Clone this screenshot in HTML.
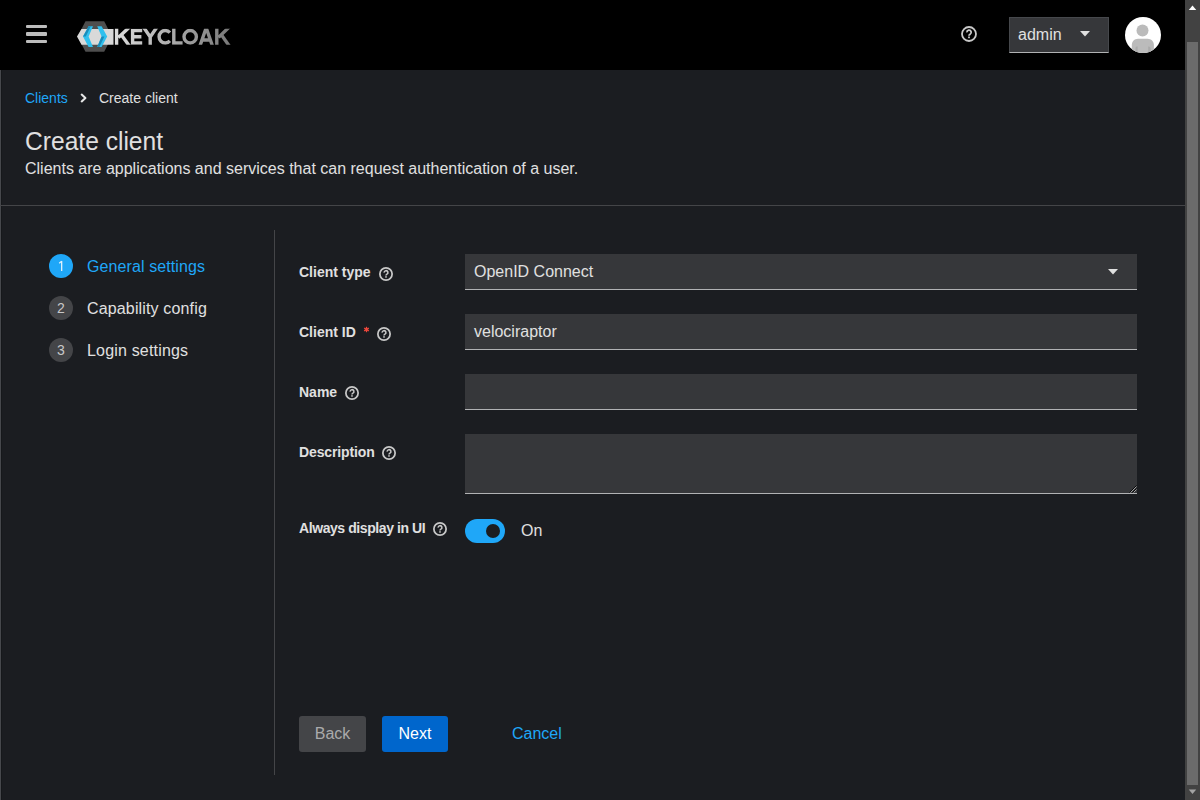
<!DOCTYPE html>
<html>
<head>
<meta charset="utf-8">
<style>
*{box-sizing:border-box;margin:0;padding:0}
html,body{width:1200px;height:800px;overflow:hidden;background:#1b1d21;font-family:"Liberation Sans",sans-serif;color:#e0e0e0}
.a{position:absolute;white-space:nowrap}
#mast{position:absolute;left:0;top:0;width:1185px;height:70px;background:#000}
#main{position:absolute;left:0;top:70px;width:1185px;height:730px;background:#1b1d21}
#lline{position:absolute;left:0;top:70px;width:1px;height:730px;background:#46484c}
#lline2{position:absolute;left:1px;top:70px;width:1px;height:730px;background:#16181b}
#sb{position:absolute;left:1185px;top:0;width:15px;height:800px;background:#424242}
#thumb{position:absolute;left:1187px;top:42px;width:11px;height:743px;background:#6b6b6b}
.hr{position:absolute;background:#444548}
.t14{font-size:14px;line-height:14px}
.t16{font-size:16px;line-height:16px}
.t24{font-size:24px;line-height:24px}
.link{color:#1fa7f8}
.lbl{font-weight:bold;font-size:14px;line-height:14px;color:#e0e0e0}
.inp{position:absolute;left:465px;width:672px;background:#36373a;border-bottom:1px solid #b1b2b4}
.circ{position:absolute;left:49px;width:24px;height:24px;border-radius:12px;background:#444548;color:#c8c8c8;font-size:14px;line-height:24px;text-align:center}
.btn{position:absolute;top:716px;height:36px;border-radius:3px;font-size:16px;line-height:36px;text-align:center}
</style>
</head>
<body>
<div id="mast"></div>
<div id="main"></div>
<div id="lline"></div>
<div id="lline2"></div>

<!-- hamburger -->
<div class="a" style="left:25.6px;top:25px;width:21px;height:3px;background:#bdbdbd;border-radius:1px"></div>
<div class="a" style="left:25.6px;top:32px;width:21px;height:4px;background:#bdbdbd;border-radius:1px"></div>
<div class="a" style="left:25.6px;top:40px;width:21px;height:3px;background:#bdbdbd;border-radius:1px"></div>

<!-- logo -->
<svg class="a" style="left:0;top:0" width="240" height="70" viewBox="0 0 240 70">
  <defs>
    <linearGradient id="tg" gradientUnits="userSpaceOnUse" x1="115" y1="0" x2="229" y2="0">
      <stop offset="0" stop-color="#dcdcdc"/>
      <stop offset="0.5" stop-color="#ababab"/>
      <stop offset="1" stop-color="#7a7a7a"/>
    </linearGradient>
    <clipPath id="tc"><rect x="110" y="28.75" width="125" height="16"/></clipPath>
  </defs>
  <polygon points="85.5,21.2 104.2,21.2 112,36.5 104.2,51.8 85.5,51.8 77.5,36.5" fill="#4e4e4e"/>
  <polygon points="77,36.6 81.5,29 113.5,29 113.5,44.8 81.5,44.8" fill="#d9d9d9"/>
  <polygon points="83,36.6 88.6,26.3 93,26.3 88.6,36.6 93,47 88.6,47" fill="#30c0ee"/>
  <polygon points="83,36.6 88.6,26.3 90.8,26.3 85.8,36.6" fill="#1a8cba"/>
  <polygon points="107.2,36.6 101.6,26.3 97.2,26.3 101.6,36.6 97.2,47 101.6,47" fill="#30c0ee"/>
  <polygon points="101.6,36.6 104.4,36.6 99.4,47 97.2,47" fill="#1a8cba"/>
  <g clip-path="url(#tc)" fill="none" stroke="url(#tg)" stroke-width="3.4" stroke-linejoin="miter" stroke-miterlimit="10">
    <path d="M116.6 27 V46.5 M129.6 27 L118.4 37.4"/><path d="M121.8 35.6 L129.8 46.5"/>
    <path d="M142.2 30.55 H132.6 V42.95 H142.2 M132.6 36.7 H141.4"/>
    <path d="M143.4 27 L150.2 37 L157 27 M150.2 37 V46.5"/>
    <path d="M169.9 32.6 A6.2 6.2 0 1 0 169.9 40.9"/>
    <path d="M173.8 27 V42.95 H182.6"/>
    <circle cx="190.2" cy="36.75" r="6.2"/>
    <path d="M199.6 47 L206.2 27.8 L212.8 47 M202 40 H210.4"/>
    <path d="M216.8 27 V46.5 M229.2 27 L218.6 37.4"/><path d="M222 35.6 L229.6 46.5"/>
  </g>
</svg>

<!-- header help -->
<svg class="a" style="left:961px;top:26px" width="16" height="16" viewBox="0 0 16 16">
  <circle cx="8" cy="8" r="7" fill="none" stroke="#c8c8c8" stroke-width="1.8"/>
  <path d="M5.9 6.4 A2.15 2.15 0 1 1 9.1 8.2 C8.3 8.7 8 9 8 9.7" fill="none" stroke="#c8c8c8" stroke-width="1.8"/><rect x="7.1" y="10.5" width="1.8" height="1.7" fill="#c8c8c8"/>
</svg>

<!-- admin dropdown -->
<div class="a" style="left:1009px;top:17px;width:100px;height:36px;background:#36373a;border:1px solid #46484c;border-bottom-color:#b1b2b4"></div>
<div class="a t16" style="left:1018px;top:27px;color:#e0e0e0">admin</div>
<svg class="a" style="left:1080px;top:31px" width="10" height="6" viewBox="0 0 10 6"><polygon points="0,0 10,0 5,5.5" fill="#e0e0e0"/></svg>

<!-- avatar -->
<svg class="a" style="left:1125px;top:17px" width="36" height="36" viewBox="0 0 36 36">
  <defs><clipPath id="ac"><circle cx="18" cy="18" r="18"/></clipPath></defs>
  <circle cx="18" cy="18" r="18" fill="#fff"/>
  <g clip-path="url(#ac)">
    <circle cx="17.5" cy="13.4" r="6" fill="#bbb"/>
    <path d="M6.8 36 L6.8 28 C6.8 24.5 9.5 21.7 13 21.7 L22.6 21.7 C26.1 21.7 28.9 24.5 28.9 28 L28.9 36 Z" fill="#bbb"/><path d="M10.5 36 L10.5 31.5 C10.5 30.2 11.2 29.6 12 29.6 L12.6 29.6 L12.6 36 Z" fill="#aaa"/><path d="M23.2 29.6 L23.8 29.6 C24.8 29.8 25.6 30.6 25.6 31.8 L25.6 36 L23.2 36 Z" fill="#aaa"/>
  </g>
</svg>

<!-- scrollbar -->
<div id="sb"></div>
<div id="thumb"></div>
<svg class="a" style="left:1185px;top:0" width="15" height="15" viewBox="0 0 15 15"><polygon points="3.75,10 11.25,10 7.5,5.6" fill="#fff"/></svg>
<svg class="a" style="left:1185px;top:785px" width="15" height="15" viewBox="0 0 15 15"><polygon points="3.75,4.4 11.25,4.4 7.5,9" fill="#a3a3a3"/></svg>

<!-- breadcrumb -->
<div class="a t14 link" style="left:25px;top:91px">Clients</div>
<svg class="a" style="left:79.6px;top:92px" width="8" height="12" viewBox="0 0 8 12"><path d="M1.7 2.6 L5.4 6 L1.7 9.4" fill="none" stroke="#e6e6e6" stroke-width="2.1" stroke-linecap="round" stroke-linejoin="round"/></svg>
<div class="a t14" style="left:99px;top:91px">Create client</div>

<!-- title -->
<div class="a" style="left:25px;top:129px;font-size:24.6px;line-height:24px;transform:scale(1,1.06);transform-origin:0 0">Create client</div>
<div class="a t16" style="left:25px;top:161px">Clients are applications and services that can request authentication of a user.</div>

<div class="hr" style="left:0;top:205px;width:1185px;height:1px"></div>
<div class="hr" style="left:274px;top:230px;width:1px;height:545px"></div>

<!-- wizard nav -->
<div class="circ" style="top:254px;background:#1fa7f8;color:#e8f4fd"></div><svg class="a" style="left:49px;top:254px" width="24" height="24" viewBox="0 0 24 24"><path d="M12.65 7 V17" stroke="#dff0fb" stroke-width="1.35"/><path d="M10.2 9.3 L12.6 7.25" stroke="#dff0fb" stroke-width="1.2"/></svg>
<div class="a t16 link" style="left:87px;top:259px;letter-spacing:0.1px">General settings</div>
<div class="circ" style="top:296px">2</div>
<div class="a t16" style="left:87px;top:301px;letter-spacing:0.15px">Capability config</div>
<div class="circ" style="top:338px">3</div>
<div class="a t16" style="left:87px;top:343px;letter-spacing:0.18px">Login settings</div>

<!-- form -->
<div class="a lbl" style="left:299px;top:265px">Client type</div>
<div class="a lbl" style="left:299px;top:325px">Client ID</div>
<div class="a lbl" style="left:299px;top:385px">Name</div>
<div class="a lbl" style="left:299px;top:445px;letter-spacing:-0.12px">Description</div>
<div class="a lbl" style="left:299px;top:521px;letter-spacing:-0.42px">Always display in UI</div>


<!-- label help icons -->
<svg class="a" style="left:379px;top:267px" width="14" height="14" viewBox="0 0 16 16"><circle cx="8" cy="8" r="7" fill="none" stroke="#c8c8c8" stroke-width="2"/><path d="M5.9 6.4 A2.15 2.15 0 1 1 9.1 8.2 C8.3 8.7 8 9 8 9.7" fill="none" stroke="#c8c8c8" stroke-width="1.8"/><rect x="7.1" y="10.5" width="1.8" height="1.7" fill="#c8c8c8"/></svg>
<svg class="a" style="left:377px;top:327px" width="14" height="14" viewBox="0 0 16 16"><circle cx="8" cy="8" r="7" fill="none" stroke="#c8c8c8" stroke-width="2"/><path d="M5.9 6.4 A2.15 2.15 0 1 1 9.1 8.2 C8.3 8.7 8 9 8 9.7" fill="none" stroke="#c8c8c8" stroke-width="1.8"/><rect x="7.1" y="10.5" width="1.8" height="1.7" fill="#c8c8c8"/></svg>
<svg class="a" style="left:345px;top:386px" width="14" height="14" viewBox="0 0 16 16"><circle cx="8" cy="8" r="7" fill="none" stroke="#c8c8c8" stroke-width="2"/><path d="M5.9 6.4 A2.15 2.15 0 1 1 9.1 8.2 C8.3 8.7 8 9 8 9.7" fill="none" stroke="#c8c8c8" stroke-width="1.8"/><rect x="7.1" y="10.5" width="1.8" height="1.7" fill="#c8c8c8"/></svg>
<svg class="a" style="left:382px;top:446px" width="14" height="14" viewBox="0 0 16 16"><circle cx="8" cy="8" r="7" fill="none" stroke="#c8c8c8" stroke-width="2"/><path d="M5.9 6.4 A2.15 2.15 0 1 1 9.1 8.2 C8.3 8.7 8 9 8 9.7" fill="none" stroke="#c8c8c8" stroke-width="1.8"/><rect x="7.1" y="10.5" width="1.8" height="1.7" fill="#c8c8c8"/></svg>
<svg class="a" style="left:433px;top:522px" width="14" height="14" viewBox="0 0 16 16"><circle cx="8" cy="8" r="7" fill="none" stroke="#c8c8c8" stroke-width="2"/><path d="M5.9 6.4 A2.15 2.15 0 1 1 9.1 8.2 C8.3 8.7 8 9 8 9.7" fill="none" stroke="#c8c8c8" stroke-width="1.8"/><rect x="7.1" y="10.5" width="1.8" height="1.7" fill="#c8c8c8"/></svg>
<svg class="a" style="left:362px;top:325px" width="9" height="9" viewBox="0 0 9 9"><g stroke="#f0483c" stroke-width="1.3"><path d="M4.5 1.8 V7.2"/><path d="M2.16 3.15 L6.84 5.85"/><path d="M2.16 5.85 L6.84 3.15"/></g></svg>
<div class="inp" style="top:254px;height:36px"></div>
<div class="a t16" style="left:474px;top:264px">OpenID Connect</div>
<svg class="a" style="left:1108px;top:269px" width="10" height="6" viewBox="0 0 10 6"><polygon points="0,0 10,0 5,5.5" fill="#e0e0e0"/></svg>

<div class="inp" style="top:314px;height:36px"></div>
<div class="a t16" style="left:474px;top:324px">velociraptor</div>

<div class="inp" style="top:374px;height:36px"></div>
<div class="inp" style="top:434px;height:60px"></div>

<svg class="a" style="left:1129px;top:485px" width="8" height="8" viewBox="0 0 8 8">
  <path d="M7.5 0.5 L0.5 7.5" stroke="#000" stroke-width="0.9"/><path d="M7.5 1.5 L1.5 7.5" stroke="#bbb" stroke-width="0.8"/>
  <path d="M7.5 3.5 L3.5 7.5" stroke="#000" stroke-width="0.9"/><path d="M7.5 4.5 L4.5 7.5" stroke="#bbb" stroke-width="0.8"/>
</svg>
<!-- toggle -->
<div class="a" style="left:465px;top:519px;width:40px;height:24px;border-radius:12px;background:#1fa7f8"></div>
<div class="a" style="left:486px;top:524px;width:14px;height:14px;border-radius:7px;background:#1b1d21"></div>
<div class="a t16" style="left:521px;top:523px">On</div>

<!-- buttons -->
<div class="btn" style="left:299px;width:67px;background:#444548;color:#aaabac">Back</div>
<div class="btn" style="left:382px;width:66px;background:#0066cc;color:#fff">Next</div>
<div class="a t16 link" style="left:512px;top:726px">Cancel</div>

</body>
</html>
